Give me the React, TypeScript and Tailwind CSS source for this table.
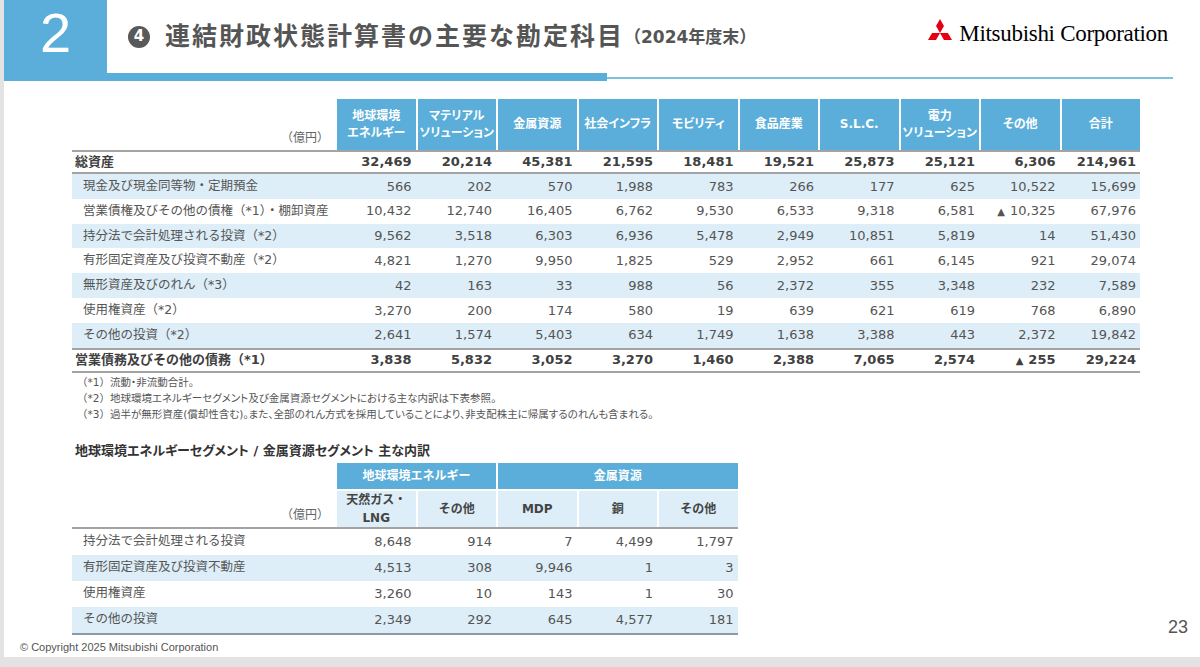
import React from 'react';

const heads: React.ReactNode[] = [
  <>地球環境<br />エネルギー</>,
  <>マテリアル<br />ソリューション</>,
  '金属資源',
  '社会インフラ',
  'モビリティ',
  '食品産業',
  'S.L.C.',
  <>電力<br />ソリューション</>,
  'その他',
  '合計',
];

const total = ['32,469', '20,214', '45,381', '21,595', '18,481', '19,521', '25,873', '25,121', '6,306', '214,961'];

const rows: { label: string; values: string[] }[] = [
  { label: '現金及び現金同等物・定期預金', values: ['566', '202', '570', '1,988', '783', '266', '177', '625', '10,522', '15,699'] },
  { label: '営業債権及びその他の債権（*1）・棚卸資産', values: ['10,432', '12,740', '16,405', '6,762', '9,530', '6,533', '9,318', '6,581', '▲10,325', '67,976'] },
  { label: '持分法で会計処理される投資（*2）', values: ['9,562', '3,518', '6,303', '6,936', '5,478', '2,949', '10,851', '5,819', '14', '51,430'] },
  { label: '有形固定資産及び投資不動産（*2）', values: ['4,821', '1,270', '9,950', '1,825', '529', '2,952', '661', '6,145', '921', '29,074'] },
  { label: '無形資産及びのれん（*3）', values: ['42', '163', '33', '988', '56', '2,372', '355', '3,348', '232', '7,589'] },
  { label: '使用権資産（*2）', values: ['3,270', '200', '174', '580', '19', '639', '621', '619', '768', '6,890'] },
  { label: 'その他の投資（*2）', values: ['2,641', '1,574', '5,403', '634', '1,749', '1,638', '3,388', '443', '2,372', '19,842'] },
];

const payables = ['3,838', '5,832', '3,052', '3,270', '1,460', '2,388', '7,065', '2,574', '▲255', '29,224'];

const subRows: { label: string; values: string[] }[] = [
  { label: '持分法で会計処理される投資', values: ['8,648', '914', '7', '4,499', '1,797'] },
  { label: '有形固定資産及び投資不動産', values: ['4,513', '308', '9,946', '1', '3'] },
  { label: '使用権資産', values: ['3,260', '10', '143', '1', '30'] },
  { label: 'その他の投資', values: ['2,349', '292', '645', '4,577', '181'] },
];

const notes = [
  ['（*1）', '流動・非流動合計。'],
  ['（*2）', '地球環境エネルギーセグメント及び金属資源セグメントにおける主な内訳は下表参照。'],
  ['（*3）', '過半が無形資産(償却性含む)。また、全部のれん方式を採用していることにより、非支配株主に帰属するのれんも含まれる。'],
];

// "▲" values get a smaller triangle glyph in front
const Num = ({ v }: { v: string }) =>
  v.startsWith('▲') ? (
    <>
      <span className="text-[10px] mr-[5px]">▲</span>
      {v.slice(1)}
    </>
  ) : (
    <>{v}</>
  );

const Logo = () => (
  <div className="flex items-end gap-[5px]">
    <svg width="28" height="24" viewBox="0 0 28.2 22" className="mb-[3px]">
      <polygon points="14.1,0 18.1,7 14.1,14 10.1,7" fill="#e60012" />
      <polygon points="14.1,14 22.1,14 26.2,21 18.1,21" fill="#e60012" />
      <polygon points="14.1,14 6.1,14 2,21 10.1,21" fill="#e60012" />
    </svg>
    <span className="font-['Liberation_Serif',serif] text-[23px] leading-none text-black tracking-[-0.3px]">
      Mitsubishi Corporation
    </span>
  </div>
);

const Header = () => (
  <div className="flex h-[81px] shrink-0">
    <div className="w-[103px] bg-[#5aaed9] flex items-center justify-center pb-[15px] text-white text-[56px] leading-none font-['Liberation_Sans',sans-serif]">
      2
    </div>
    <div className="w-[500px] shrink-0 flex flex-col">
      <div className="h-[73px] flex items-center pl-[21px] whitespace-nowrap">
        <span className="shrink-0 w-[22px] h-[22px] rounded-full bg-[#595959] text-white text-[15px] font-bold leading-none flex items-center justify-center">
          4
        </span>
        <span className="shrink-0 ml-[15px] text-[25px] font-bold text-[#555] tracking-[2px]">
          連結財政状態計算書の主要な勘定科目
        </span>
        <span className="shrink-0 mt-[3px] text-[17px] font-bold text-[#555]">（2024年度末）</span>
      </div>
      <div className="h-[8px] bg-[#5aaed9]" />
    </div>
    <div className="flex-1 flex flex-col">
      <div className="h-[77px] flex items-center justify-end pr-[32px] pb-[14px]">
        <Logo />
      </div>
      <div className="h-[2px] bg-[#7ec1e1] mr-[27px]" />
    </div>
  </div>
);

const MainTable = () => (
  <div className="w-[1068px] text-[13px]">
    <div className="grid grid-cols-[263px_repeat(10,80.5px)] h-[51px]">
      <div className="flex items-end justify-end pr-[6px] pb-[3px] text-[12px] text-[#666]">（億円）</div>
      {heads.map((h, i) => (
        <div
          key={i}
          className="border-l-2 border-white bg-[#5aaed9] flex items-center justify-center text-center text-white font-bold text-[12px] leading-[17px] [font-feature-settings:'palt']"
        >
          <div>{h}</div>
        </div>
      ))}
    </div>
    <div className="h-[2px] bg-[#a3a3a3]" />
    <div className="grid grid-cols-[263px_repeat(10,80.5px)] h-[20px] items-center font-bold text-[#404040]">
      <div className="pl-[3px]">総資産</div>
      {total.map((v, i) => (
        <div key={i} className="text-right pr-[4px]">{v}</div>
      ))}
    </div>
    <div className="h-[2px] bg-[#a3a3a3]" />
    {rows.map((r, ri) => (
      <div
        key={r.label}
        className={`grid grid-cols-[263px_repeat(10,80.5px)] h-[24.8px] items-center text-[#555] ${ri % 2 === 0 ? 'bg-[#ddeef8]' : 'bg-white'}`}
      >
        <div className="pl-[11px] text-[12.5px] whitespace-nowrap">{r.label}</div>
        {r.values.map((v, i) => (
          <div key={i} className="text-right pr-[4px]">
            <Num v={v} />
          </div>
        ))}
      </div>
    ))}
    <div className="h-[2px] bg-[#a3a3a3]" />
    <div className="grid grid-cols-[263px_repeat(10,80.5px)] h-[21px] items-center font-bold text-[#404040]">
      <div className="pl-[3px] whitespace-nowrap">営業債務及びその他の債務（*1）</div>
      {payables.map((v, i) => (
        <div key={i} className="text-right pr-[4px]">
          <Num v={v} />
        </div>
      ))}
    </div>
    <div className="h-[2px] bg-[#a3a3a3]" />
  </div>
);

const Footnotes = () => (
  <div className="pl-[5px] pt-[1px] text-[10.5px] leading-[16px] text-[#555]">
    {notes.map(([mark, text]) => (
      <div key={mark} className="whitespace-nowrap">
        <span>{mark}</span>
        <span className="[font-feature-settings:'palt']">{text}</span>
      </div>
    ))}
  </div>
);

const SubTable = () => (
  <div className="mt-[20px]">
    <div className="pl-[3px] text-[13px] leading-[18px] font-bold text-[#333] [font-feature-settings:'palt']">
      地球環境エネルギーセグメント / 金属資源セグメント 主な内訳
    </div>
    <div className="flex items-end mt-[3px]">
      <div className="w-[665.5px] text-[13px]">
        <div className="grid grid-cols-[263px_repeat(5,80.5px)] h-[26px]">
          <div />
          <div className="col-span-2 border-l-2 border-white bg-[#5aaed9] flex items-center justify-center text-white font-bold text-[12px]">
            地球環境エネルギー
          </div>
          <div className="col-span-3 border-l-2 border-white bg-[#5aaed9] flex items-center justify-center text-white font-bold text-[12px]">
            金属資源
          </div>
        </div>
        <div className="grid grid-cols-[263px_repeat(5,80.5px)] h-[38px] border-t-2 border-white">
          <div className="flex items-end justify-end pr-[6px] pb-[3px] text-[12px] text-[#666]">（億円）</div>
          {[<>天然ガス・<br />LNG</>, 'その他', 'MDP', '銅', 'その他'].map((h, i) => (
            <div
              key={i}
              className="border-l-2 border-white bg-[#ddeef8] flex items-center justify-center text-center text-[#444] font-bold text-[12px] leading-[18px]"
            >
              <div>{h}</div>
            </div>
          ))}
        </div>
        <div className="h-[2px] bg-[#a3a3a3]" />
        {subRows.map((r, ri) => (
          <div
            key={r.label}
            className={`grid grid-cols-[263px_repeat(5,80.5px)] h-[26px] items-center text-[#555] ${ri % 2 === 1 ? 'bg-[#ddeef8]' : 'bg-white'}`}
          >
            <div className="pl-[11px] text-[12.5px]">{r.label}</div>
            {r.values.map((v, i) => (
              <div key={i} className="text-right pr-[4px]">{v}</div>
            ))}
          </div>
        ))}
        <div className="h-[2px] bg-[#8c9aa8]" />
      </div>
      <div className="ml-auto mr-[12px] mb-[-1px] text-[18px] leading-none text-[#555] font-['Liberation_Sans',sans-serif]">
        23
      </div>
    </div>
  </div>
);

export default function App() {
  return (
    <div className="w-[1200px] h-[667px] bg-[#e3e3e3] overflow-hidden font-['DejaVu_Sans','Noto_Sans_CJK_JP',sans-serif]">
      <div className="ml-[4px] w-[1196px] h-[657px] bg-white flex flex-col">
        <Header />
        <div className="pl-[68px] pt-[18px]">
          <MainTable />
          <Footnotes />
          <SubTable />
        </div>
        <div className="mt-auto pl-[16px] pb-[3px] text-[11px] leading-[14px] text-[#555] font-['Liberation_Sans',sans-serif]">
          © Copyright 2025 Mitsubishi Corporation
        </div>
      </div>
    </div>
  );
}
